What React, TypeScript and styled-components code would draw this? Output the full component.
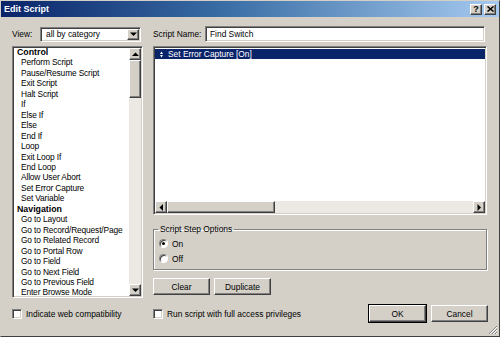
import styled, {createGlobalStyle, css} from 'styled-components';

const GlobalStyle = createGlobalStyle`
  html, body {
    margin: 0;
    padding: 0;
    background: #d4d0c8;
  }
  body {
    font-family: "Liberation Sans", Arial, sans-serif;
    font-size: 8.4px;
    color: #000;
  }
  #root {
    width: 500px;
    height: 337px;
  }
`;

const raised = css`
  border: 1px solid;
  border-color: #fff #404040 #404040 #fff;
  box-shadow: inset -1px -1px 0 #808080, inset 1px 1px 0 #d4d0c8;
  background: #d4d0c8;
`;

const sunken = css`
  border: 1px solid;
  border-color: #808080 #fff #fff #808080;
  box-shadow: inset 1px 1px 0 #404040, inset -1px -1px 0 #d4d0c8;
  background: #fff;
`;

const Window = styled.div`
  position: relative;
  width: 500px;
  height: 337px;
  box-sizing: border-box;
  background: #d4d0c8;
  border: 1px solid;
  border-color: #d4d0c8 #404040 #404040 #d4d0c8;
  display: flex;
  flex-direction: column;
  overflow: hidden;
`;

const TitleBar = styled.div`
  height: 16px;
  display: flex;
  align-items: center;
  justify-content: space-between;
  padding: 0 3px 0 3px;
  background: linear-gradient(to right, #0a246a 0%, #3a6ea5 45%, #a6caf0 100%);
`;

const Title = styled.span`
  color: #fff;
  font-weight: bold;
  font-size: 9px;
`;

const Caps = styled.div`
  display: flex;
  gap: 2px;
`;

const CapButton = styled.div`
  ${raised};
  box-sizing: border-box;
  width: 12px;
  height: 11px;
  display: flex;
  align-items: center;
  justify-content: center;
  font-weight: bold;
  font-size: 9px;
  line-height: 1;
`;

const Body = styled.div`
  flex: 1;
  padding: 9px 11px 0 11px;
  display: flex;
  flex-direction: column;
`;

const Columns = styled.div`
  display: grid;
  grid-template-columns: 131px 1fr;
  column-gap: 10px;
`;

const Column = styled.div`
  display: flex;
  flex-direction: column;
`;

const FieldRow = styled.div`
  height: 16px;
  display: flex;
  align-items: center;
  margin-bottom: 4px;
`;

const Label = styled.span<{width: number}>`
  width: ${p => p.width}px;
  flex-shrink: 0;
`;

const Combo = styled.div`
  ${sunken};
  box-sizing: border-box;
  width: 101px;
  height: 15px;
  display: flex;
  align-items: center;
  justify-content: space-between;
  padding: 1px 1px 1px 5px;
`;

const SmallButton = styled.div`
  ${raised};
  box-sizing: border-box;
  width: 12px;
  height: 12px;
  display: flex;
  align-items: center;
  justify-content: center;
  flex-shrink: 0;
`;

const TextInput = styled.div`
  ${sunken};
  box-sizing: border-box;
  flex: 1;
  height: 16px;
  margin-right: 3px;
  display: flex;
  align-items: center;
  padding-left: 4px;
`;

const ListBox = styled.div`
  ${sunken};
  box-sizing: border-box;
  height: 252px;
  display: flex;
  padding: 1px;
`;

const ListItems = styled.ul`
  flex: 1;
  margin: -1px 0 0 0;
  padding: 0 0 0 3px;
  list-style: none;
  overflow: hidden;
  line-height: 10.45px;
  letter-spacing: -0.15px;
`;

const Item = styled.li<{heading?: boolean}>`
  white-space: nowrap;
  padding-left: ${p => (p.heading ? 0 : 4)}px;
  font-weight: ${p => (p.heading ? 'bold' : 'normal')};
  font-size: ${p => (p.heading ? '8.8px' : '8.4px')};
  letter-spacing: ${p => (p.heading ? '0' : '-0.15px')};
`;

const VScroll = styled.div`
  width: 12px;
  display: flex;
  flex-direction: column;
  background: #ece9e4;
`;

const VThumb = styled.div`
  ${raised};
  box-sizing: border-box;
  height: 38px;
`;

const Track = styled.div`
  flex: 1;
`;

const StepsBox = styled.div`
  ${sunken};
  box-sizing: border-box;
  height: 169px;
  margin-right: 1px;
  display: flex;
  flex-direction: column;
  padding: 1px;
`;

const StepsArea = styled.div`
  flex: 1;
  padding-top: 1px;
`;

const StepRow = styled.div<{selected?: boolean}>`
  height: 10px;
  display: flex;
  align-items: center;
  gap: 5px;
  padding-left: 5px;
  background: ${p => (p.selected ? '#0a246a' : 'transparent')};
  color: ${p => (p.selected ? '#fff' : '#000')};
`;

const HScroll = styled.div`
  height: 12px;
  display: flex;
  background: #ece9e4;
`;

const HThumb = styled.div`
  ${raised};
  box-sizing: border-box;
  width: 108px;
`;

const Group = styled.fieldset`
  margin: 9px 1px 0 0;
  padding: 2px 6px 3px 4px;
  border: 1px solid #808080;
  box-shadow: 1px 1px 0 #fff, inset 1px 1px 0 #fff;
`;

const Legend = styled.legend`
  padding: 0 2px;
  margin-left: 0;
  line-height: 10px;
`;

const RadioRow = styled.label`
  height: 15px;
  display: flex;
  align-items: center;
  gap: 4px;
  padding-left: 1px;
`;

const RadioDot = styled.span<{checked?: boolean}>`
  box-sizing: border-box;
  width: 9px;
  height: 9px;
  border-radius: 50%;
  border: 1px solid;
  border-color: #808080 #fff #fff #808080;
  background: #fff;
  box-shadow: inset 1px 1px 0 #404040;
  position: relative;

  &::after {
    content: '';
    display: ${p => (p.checked ? 'block' : 'none')};
    position: absolute;
    left: 2px;
    top: 2px;
    width: 3px;
    height: 3px;
    border-radius: 50%;
    background: #000;
  }
`;

const ButtonRow = styled.div`
  display: flex;
  gap: 4px;
  margin-top: 8px;
`;

const Button = styled.div<{primary?: boolean}>`
  ${raised};
  box-sizing: border-box;
  width: 57px;
  height: 17px;
  display: flex;
  align-items: center;
  justify-content: center;
  ${p =>
    p.primary &&
    css`
      outline: 1px solid #000;
      outline-offset: 0;
    `}
`;

const Footer = styled.div`
  display: grid;
  grid-template-columns: 131px 1fr;
  column-gap: 10px;
  margin-top: 7px;
  height: 17px;
  align-items: center;
`;

const FooterRight = styled.div`
  display: flex;
  align-items: center;
  justify-content: space-between;
`;

const Check = styled.label`
  display: flex;
  align-items: center;
  gap: 4px;
  white-space: nowrap;
`;

const CheckBox = styled.span`
  ${sunken};
  box-sizing: border-box;
  width: 10px;
  height: 10px;
  flex-shrink: 0;
`;

const Actions = styled.div`
  display: flex;
  gap: 5px;
`;

const Grip = styled.svg`
  position: absolute;
  right: 1px;
  bottom: 1px;
`;

function Arrow({dir}: {dir: 'up' | 'down' | 'left' | 'right'}) {
  const points = {
    up: '0,4 7,4 3.5,0.5',
    down: '0,0.5 7,0.5 3.5,4',
    left: '4,0 4,7 0.5,3.5',
    right: '0.5,0 0.5,7 4,3.5',
  }[dir];
  const vertical = dir === 'up' || dir === 'down';
  return (
    <svg width={vertical ? 7 : 4} height={vertical ? 4 : 7} viewBox={vertical ? '0 0 7 4' : '0 0 4 7'}>
      <polygon points={points} fill="#000" />
    </svg>
  );
}

const steps = [
  {name: 'Control', heading: true},
  {name: 'Perform Script'},
  {name: 'Pause/Resume Script'},
  {name: 'Exit Script'},
  {name: 'Halt Script'},
  {name: 'If'},
  {name: 'Else If'},
  {name: 'Else'},
  {name: 'End If'},
  {name: 'Loop'},
  {name: 'Exit Loop If'},
  {name: 'End Loop'},
  {name: 'Allow User Abort'},
  {name: 'Set Error Capture'},
  {name: 'Set Variable'},
  {name: 'Navigation', heading: true},
  {name: 'Go to Layout'},
  {name: 'Go to Record/Request/Page'},
  {name: 'Go to Related Record'},
  {name: 'Go to Portal Row'},
  {name: 'Go to Field'},
  {name: 'Go to Next Field'},
  {name: 'Go to Previous Field'},
  {name: 'Enter Browse Mode'},
];

export default function App() {
  return (
    <>
      <GlobalStyle />
      <Window>
        <TitleBar>
          <Title>Edit Script</Title>
          <Caps>
            <CapButton>?</CapButton>
            <CapButton>
              <svg width="7" height="6" viewBox="0 0 7 6">
                <path d="M0.5 0.5 L6.5 5.5 M6.5 0.5 L0.5 5.5" stroke="#000" strokeWidth="1.5" />
              </svg>
            </CapButton>
          </Caps>
        </TitleBar>

        <Body>
          <Columns>
            <Column>
              <FieldRow>
                <Label width={28}>View:</Label>
                <Combo>
                  <span>all by category</span>
                  <SmallButton style={{height: 11}}>
                    <Arrow dir="down" />
                  </SmallButton>
                </Combo>
              </FieldRow>
              <ListBox>
                <ListItems>
                  {steps.map(s => (
                    <Item key={s.name} heading={s.heading}>
                      {s.name}
                    </Item>
                  ))}
                </ListItems>
                <VScroll>
                  <SmallButton>
                    <Arrow dir="up" />
                  </SmallButton>
                  <VThumb />
                  <Track />
                  <SmallButton>
                    <Arrow dir="down" />
                  </SmallButton>
                </VScroll>
              </ListBox>
            </Column>

            <Column>
              <FieldRow>
                <Label width={52}>Script Name:</Label>
                <TextInput>Find Switch</TextInput>
              </FieldRow>
              <StepsBox>
                <StepsArea>
                  <StepRow selected>
                    <svg width="3" height="7" viewBox="0 0 3 7">
                      <polygon points="0,3 3,3 1.5,0.5" fill="#fff" />
                      <polygon points="0,4 3,4 1.5,6.5" fill="#fff" />
                    </svg>
                    <span>Set Error Capture [On]</span>
                  </StepRow>
                </StepsArea>
                <HScroll>
                  <SmallButton>
                    <Arrow dir="left" />
                  </SmallButton>
                  <HThumb />
                  <Track />
                  <SmallButton>
                    <Arrow dir="right" />
                  </SmallButton>
                </HScroll>
              </StepsBox>
              <Group>
                <Legend>Script Step Options</Legend>
                <RadioRow>
                  <RadioDot checked />
                  On
                </RadioRow>
                <RadioRow>
                  <RadioDot />
                  Off
                </RadioRow>
              </Group>
              <ButtonRow>
                <Button>Clear</Button>
                <Button>Duplicate</Button>
              </ButtonRow>
            </Column>
          </Columns>

          <Footer>
            <Check>
              <CheckBox />
              Indicate web compatibility
            </Check>
            <FooterRight>
              <Check>
                <CheckBox />
                Run script with full access privileges
              </Check>
              <Actions>
                <Button primary>OK</Button>
                <Button>Cancel</Button>
              </Actions>
            </FooterRight>
          </Footer>
        </Body>

        <Grip width="11" height="11" viewBox="0 0 11 11">
          <path d="M10 2 L2 10 M10 5 L5 10 M10 8 L8 10" stroke="#808080" strokeWidth="1" />
          <path d="M10 3 L3 10 M10 6 L6 10 M10 9 L9 10" stroke="#fff" strokeWidth="1" />
        </Grip>
      </Window>
    </>
  );
}
